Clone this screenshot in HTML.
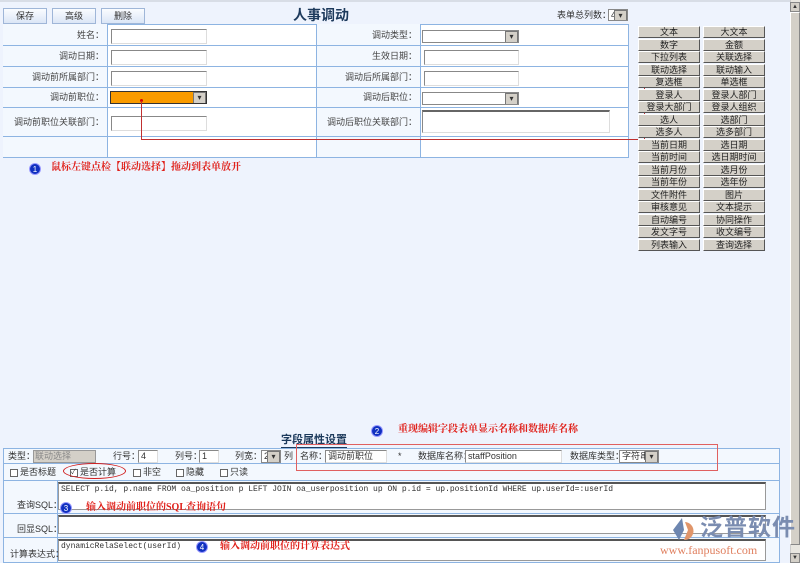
<!DOCTYPE html>
<html><head><meta charset="utf-8"><style>
*{box-sizing:border-box;margin:0;padding:0}
body{width:800px;height:563px;background:#eef3fd;font-family:"Liberation Sans","Noto Sans CJK SC",sans-serif;font-size:9px;line-height:1.2;color:#333;position:relative;overflow:hidden}
.a{position:absolute}
.btn{position:absolute;top:8px;height:16px;width:44px;border:1px solid #9fb6d8;background:linear-gradient(#fafcff,#dbe6f6);text-align:center;line-height:14px;font-size:9px}
.lbl{position:absolute;text-align:right;font-size:9px;color:#444}
.inp{position:absolute;height:15px;border:1px solid #888;border-right-color:#ddd;border-bottom-color:#ddd;background:#fff;font-size:9px;line-height:13px;padding-left:2px}
.sel{position:absolute;height:13px;border:1px solid #888;background:#fff;overflow:hidden}
.sel:after{content:"▾";position:absolute;right:0;top:0;width:11px;height:11px;background:#d4d0c8;border:1px solid #777;font-size:8px;line-height:9px;text-align:center}
.pb{position:absolute;width:62px;height:12px;background:#d4d0c8;border:1px solid #fff;border-right-color:#555;border-bottom-color:#555;text-align:center;font-size:9px;line-height:10px;color:#222}
.red{color:#e0201a;font-weight:bold;font-size:10px;font-family:"Liberation Serif","Noto Serif CJK SC",serif}
.num{position:absolute;width:12px;height:12px;border-radius:50%;background:#1030c0;color:#fff;font-size:8px;line-height:12px;text-align:center;border:1px solid #99f}
.cb{display:inline-block;width:8px;height:8px;border:1px solid #666;background:#fff;vertical-align:middle;margin-right:2px}
.ta{position:absolute;background:#fff;border:1px solid #999;border-top:2px solid #555;font-family:"Liberation Mono",monospace;font-size:8px;padding:1px 2px}
.r{top:450px;line-height:13px}
</style></head><body>
<div class="a" style="left:0;top:0;width:790px;height:2px;background:#d8dde6"></div>
<div class="btn" style="left:3px">保存</div>
<div class="btn" style="left:52px">高级</div>
<div class="btn" style="left:101px">删除</div>
<div class="a" style="left:293px;top:7px;font-size:14px;font-weight:bold;color:#1d3a5c">人事调动</div>
<div class="a" style="left:557px;top:10px;font-size:9px">表单总列数：</div>
<div class="sel" style="left:608px;top:9px;width:20px;height:12px;font-size:9px;line-height:10px;padding-left:2px">4</div>

<div class="a" style="left:3px;top:24px;width:626px;height:134px;border:1px solid #8db4e2;border-right:none;border-bottom:none;background:#fff"></div>
<div class="a" style="left:3px;top:24px;width:104px;height:134px;background:#f3f8fe"></div>
<div class="a" style="left:316px;top:24px;width:104px;height:134px;background:#f3f8fe"></div>
<div class="a" style="left:107px;top:24px;width:1px;height:134px;background:#8db4e2"></div>
<div class="a" style="left:316px;top:24px;width:1px;height:134px;background:#8db4e2"></div>
<div class="a" style="left:420px;top:24px;width:1px;height:134px;background:#8db4e2"></div>
<div class="a" style="left:628px;top:24px;width:1px;height:134px;background:#8db4e2"></div>
<div class="a" style="left:3px;top:45px;width:626px;height:1px;background:#8db4e2"></div>
<div class="a" style="left:3px;top:66px;width:626px;height:1px;background:#8db4e2"></div>
<div class="a" style="left:3px;top:87px;width:626px;height:1px;background:#8db4e2"></div>
<div class="a" style="left:3px;top:107px;width:626px;height:1px;background:#8db4e2"></div>
<div class="a" style="left:3px;top:136px;width:626px;height:1px;background:#8db4e2"></div>
<div class="a" style="left:3px;top:157px;width:626px;height:1px;background:#8db4e2"></div>

<div class="lbl" style="left:3px;width:101px;top:30px">姓名：</div>
<div class="lbl" style="left:3px;width:101px;top:51px">调动日期：</div>
<div class="lbl" style="left:3px;width:101px;top:72px">调动前所属部门：</div>
<div class="lbl" style="left:3px;width:101px;top:92px">调动前职位：</div>
<div class="lbl" style="left:3px;width:101px;top:117px">调动前职位关联部门：</div>
<div class="lbl" style="left:316px;width:101px;top:30px">调动类型：</div>
<div class="lbl" style="left:316px;width:101px;top:51px">生效日期：</div>
<div class="lbl" style="left:316px;width:101px;top:72px">调动后所属部门：</div>
<div class="lbl" style="left:316px;width:101px;top:92px">调动后职位：</div>
<div class="lbl" style="left:316px;width:101px;top:117px">调动后职位关联部门：</div>

<div class="inp" style="left:111px;top:29px;width:96px"></div>
<div class="inp" style="left:111px;top:50px;width:96px"></div>
<div class="inp" style="left:111px;top:71px;width:96px"></div>
<div class="sel" style="left:110px;top:91px;width:97px;background:#f99b00;border-color:#333"></div>
<div class="inp" style="left:111px;top:116px;width:96px"></div>
<div class="sel" style="left:422px;top:30px;width:97px"></div>
<div class="inp" style="left:424px;top:50px;width:95px"></div>
<div class="inp" style="left:424px;top:71px;width:95px"></div>
<div class="sel" style="left:422px;top:92px;width:97px"></div>
<div class="inp" style="left:422px;top:110px;width:188px;height:23px;border-top:2px solid #666"></div>

<div class="a" style="left:140px;top:99px;width:3px;height:3px;background:#d00;border-radius:50%"></div>
<div class="a" style="left:141px;top:101px;width:1px;height:39px;background:#c03030"></div>
<div class="a" style="left:141px;top:139px;width:504px;height:1px;background:#c03030"></div>
<div class="a" style="left:644px;top:70px;width:1px;height:70px;background:#c03030"></div>
<div class="a" style="left:643px;top:69px;width:3px;height:3px;background:#d00;border-radius:50%"></div>

<div class="num" style="left:29px;top:163px">1</div>
<div class="a red" style="left:51px;top:162px">鼠标左键点检【联动选择】拖动到表单放开</div>

<div class="pb" style="left:638px;top:26px">文本</div><div class="pb" style="left:703px;top:26px">大文本</div>
<div class="pb" style="left:638px;top:38.5px">数字</div><div class="pb" style="left:703px;top:38.5px">金额</div>
<div class="pb" style="left:638px;top:51px">下拉列表</div><div class="pb" style="left:703px;top:51px">关联选择</div>
<div class="pb" style="left:638px;top:63.5px">联动选择</div><div class="pb" style="left:703px;top:63.5px">联动输入</div>
<div class="pb" style="left:638px;top:76px">复选框</div><div class="pb" style="left:703px;top:76px">单选框</div>
<div class="pb" style="left:638px;top:88.5px">登录人</div><div class="pb" style="left:703px;top:88.5px">登录人部门</div>
<div class="pb" style="left:638px;top:101px">登录大部门</div><div class="pb" style="left:703px;top:101px">登录人组织</div>
<div class="pb" style="left:638px;top:113.5px">选人</div><div class="pb" style="left:703px;top:113.5px">选部门</div>
<div class="pb" style="left:638px;top:126px">选多人</div><div class="pb" style="left:703px;top:126px">选多部门</div>
<div class="pb" style="left:638px;top:138.5px">当前日期</div><div class="pb" style="left:703px;top:138.5px">选日期</div>
<div class="pb" style="left:638px;top:151px">当前时间</div><div class="pb" style="left:703px;top:151px">选日期时间</div>
<div class="pb" style="left:638px;top:163.5px">当前月份</div><div class="pb" style="left:703px;top:163.5px">选月份</div>
<div class="pb" style="left:638px;top:176px">当前年份</div><div class="pb" style="left:703px;top:176px">选年份</div>
<div class="pb" style="left:638px;top:188.5px">文件附件</div><div class="pb" style="left:703px;top:188.5px">图片</div>
<div class="pb" style="left:638px;top:201px">审核意见</div><div class="pb" style="left:703px;top:201px">文本提示</div>
<div class="pb" style="left:638px;top:213.5px">自动编号</div><div class="pb" style="left:703px;top:213.5px">协同操作</div>
<div class="pb" style="left:638px;top:226px">发文字号</div><div class="pb" style="left:703px;top:226px">收文编号</div>
<div class="pb" style="left:638px;top:238.5px">列表输入</div><div class="pb" style="left:703px;top:238.5px">查询选择</div>

<div class="a" style="left:790px;top:0;width:10px;height:563px;background:#e8e6e0;border-left:1px solid #ccc"></div>
<div class="a" style="left:790px;top:2px;width:10px;height:10px;background:#d4d0c8;border:1px solid #888;font-size:6px;text-align:center;line-height:8px">▲</div>
<div class="a" style="left:790px;top:12px;width:10px;height:533px;background:#d4d0c8;border:1px solid #fff;border-right-color:#888;border-bottom-color:#888"></div>
<div class="a" style="left:790px;top:553px;width:10px;height:10px;background:#d4d0c8;border:1px solid #888;font-size:6px;text-align:center;line-height:8px">▼</div>

<div class="num" style="left:371px;top:425px">2</div>
<div class="a red" style="left:398px;top:424px">重现编辑字段表单显示名称和数据库名称</div>
<div class="a" style="left:281px;top:434px;font-size:11px;font-weight:bold;color:#1d3a5c;border-bottom:1px solid #1d3a5c">字段属性设置</div>

<div class="a" style="left:3px;top:448px;width:777px;height:115px;border:1px solid #8db4e2;background:#f3f8fe"></div>
<div class="a" style="left:3px;top:463px;width:777px;height:1px;background:#8db4e2"></div>
<div class="a" style="left:3px;top:480px;width:777px;height:1px;background:#8db4e2"></div>
<div class="a" style="left:3px;top:513px;width:777px;height:1px;background:#8db4e2"></div>
<div class="a" style="left:3px;top:537px;width:777px;height:1px;background:#8db4e2"></div>
<div class="a" style="left:57px;top:480px;width:1px;height:83px;background:#8db4e2"></div>

<div class="a r" style="left:8px">类型：</div>
<div class="a" style="left:33px;top:450px;width:63px;height:13px;background:#d4d0c8;border:1px solid #999;color:#888;line-height:11px;padding-left:1px">联动选择</div>
<div class="a r" style="left:113px">行号：</div>
<div class="inp" style="left:138px;top:450px;width:20px;height:13px;line-height:11px">4</div>
<div class="a r" style="left:175px">列号：</div>
<div class="inp" style="left:199px;top:450px;width:20px;height:13px;line-height:11px">1</div>
<div class="a r" style="left:235px">列宽：</div>
<div class="sel" style="left:261px;top:450px;width:20px;line-height:11px;padding-left:2px">2</div>
<div class="a r" style="left:284px">列</div>
<div class="a r" style="left:300px">名称：</div>
<div class="inp" style="left:325px;top:450px;width:62px;height:13px;line-height:11px">调动前职位</div>
<div class="a r" style="left:398px">*</div>
<div class="a r" style="left:418px">数据库名称：</div>
<div class="inp" style="left:465px;top:450px;width:97px;height:13px;line-height:11px">staffPosition</div>
<div class="a r" style="left:570px">数据库类型：</div>
<div class="sel" style="left:619px;top:450px;width:40px;line-height:11px;padding-left:2px">字符串</div>
<div class="a" style="left:296px;top:444px;width:422px;height:27px;border:1px solid #e06060"></div>

<div class="a" style="left:10px;top:467px"><span class="cb"></span>是否标题</div>
<div class="a" style="left:70px;top:467px"><span class="cb" style="font-size:7px;line-height:6px">✓</span>是否计算</div>
<div class="a" style="left:63px;top:463px;width:63px;height:16px;border:1.5px solid #d02020;border-radius:50%"></div>
<div class="a" style="left:133px;top:467px"><span class="cb"></span>非空</div>
<div class="a" style="left:176px;top:467px"><span class="cb"></span>隐藏</div>
<div class="a" style="left:220px;top:467px"><span class="cb"></span>只读</div>

<div class="a" style="left:17px;top:500px">查询SQL：</div>
<div class="ta" style="left:58px;top:482px;width:708px;height:28px">SELECT p.id, p.name FROM oa_position p LEFT JOIN oa_userposition up ON p.id = up.positionId WHERE up.userId=:userId</div>
<div class="num" style="left:60px;top:502px">3</div>
<div class="a red" style="left:86px;top:502px">输入调动前职位的SQL查询语句</div>

<div class="a" style="left:17px;top:524px">回显SQL：</div>
<div class="ta" style="left:58px;top:515px;width:708px;height:19px"></div>

<div class="a" style="left:10px;top:549px">计算表达式：</div>
<div class="ta" style="left:58px;top:539px;width:708px;height:22px">dynamicRelaSelect(userId)</div>
<div class="num" style="left:196px;top:541px">4</div>
<div class="a red" style="left:220px;top:541px">输入调动前职位的计算表达式</div>

<svg class="a" style="left:670px;top:516px" width="28" height="26" viewBox="0 0 28 26"><path d="M12 2 L3 14 L9 24 L14 14 Z" fill="#6d86b0"/><path d="M15 6 A9 9 0 1 1 14 24 L18 14 Z" fill="#e0956a"/></svg>
<div class="a" style="left:700px;top:514px;font-size:23px;font-weight:bold;color:#7a8cb0;letter-spacing:1px">泛普软件</div>
<div class="a" style="left:660px;top:543px;font-family:'Liberation Serif',serif;font-size:12px;color:#e08060">www.fanpusoft.com</div>
</body></html>
